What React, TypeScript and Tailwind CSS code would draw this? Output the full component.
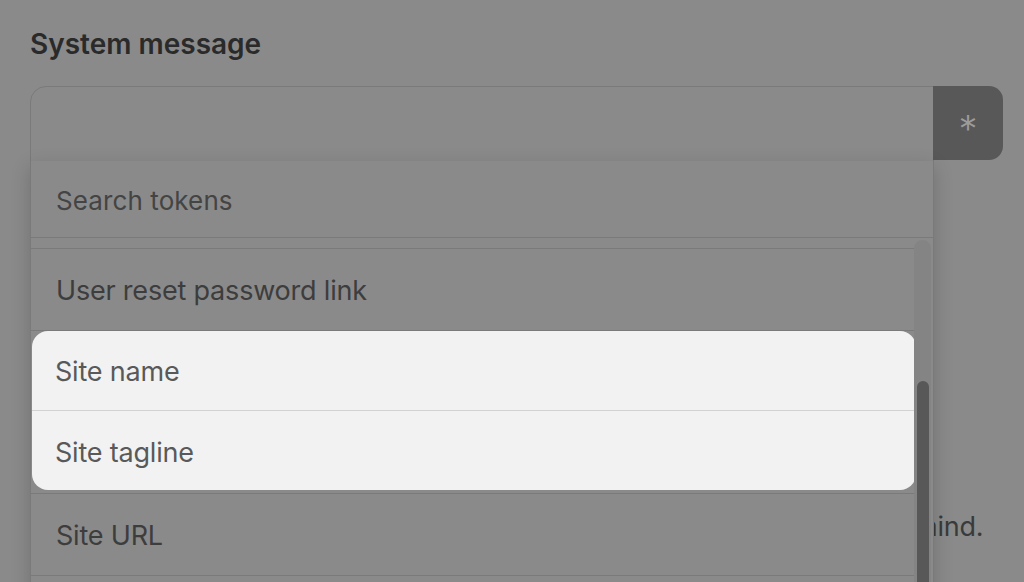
import React from 'react';

const rowText = 'text-[27px] text-[#3d3d3d] tracking-[-0.2px]';

const TokenRow: React.FC<{ label: string; className?: string }> = ({ label, className = '' }) => (
  <div className={`h-[82px] flex items-center pl-[25px] pt-[3px] border-b border-[#7a7a7a] ${rowText} ${className}`}>
    {label}
  </div>
);

const App: React.FC = () => {
  return (
    <div
      className="relative w-[1024px] h-[582px] overflow-hidden bg-[#8a8a8a]"
      style={{ fontFamily: 'Inter, "Noto Sans", sans-serif' }}
    >
      {/* background page content (dimmed) */}
      <div className="px-[30px] pt-[26px]">
        <h2 className="text-[28px] leading-[36px] font-semibold text-[#2a2a2a] tracking-[0px]">System message</h2>
        <div className="mt-[24px] flex items-start">
          <div className="shrink-0 w-[904px] h-[76px] border border-[#7a7a7a] rounded-tl-[16px] bg-[#8a8a8a]" />
          <button className="shrink-0 w-[70px] h-[74px] -ml-px bg-[#585858] rounded-r-[14px] flex items-center justify-center text-[#9c9c9c] text-[38px] font-light leading-none pt-[12px]">
            *
          </button>
        </div>
      </div>
      <div className="absolute left-[914px] top-[507px] text-[27px] text-[#3a3a3a] tracking-[-0.2px]">mind.</div>

      {/* token dropdown */}
      <div className="absolute left-[30px] top-[161px] w-[904px] h-[440px] bg-[#8a8a8a] border-x border-[#7a7a7a] shadow-[0_6px_18px_rgba(0,0,0,0.18)] flex flex-col">
        <div className="h-[77px] shrink-0 flex items-center pl-[25px] pt-[2px] border-b border-[#7a7a7a] text-[26px] text-[#444] tracking-[0.1px]">
          Search tokens
        </div>
        <div className="relative flex-1 overflow-hidden">
          <div className="-mt-[71px] pr-[19px]">
            <TokenRow label="User account name" />
            <TokenRow label="User reset password link" />
            <div className="ml-[1px] mr-[-2px] bg-[#f2f2f2] rounded-[16px] text-[#595959]">
              <div className="h-[80px] flex items-center pl-[23px] pt-[3px] border-b border-[#d2d2d2] text-[27px] tracking-[-0.2px]">Site name</div>
              <div className="h-[79px] flex items-center pl-[23px] pt-[5px] text-[27px] tracking-[-0.2px]">Site tagline</div>
            </div>
            <div className="mt-[3px] border-t border-[#7a7a7a]" />
            <TokenRow label="Site URL" />
            <TokenRow label="Site login URL" />
          </div>
          {/* scrollbar */}
          <div className="absolute right-[2px] top-[2px] bottom-0 w-[17px] rounded-t-full bg-[#848484]">
            <div className="absolute left-[3px] top-[141px] w-[12px] h-[400px] rounded-full bg-[#585858]" />
          </div>
        </div>
      </div>
    </div>
  );
};

export default App;
